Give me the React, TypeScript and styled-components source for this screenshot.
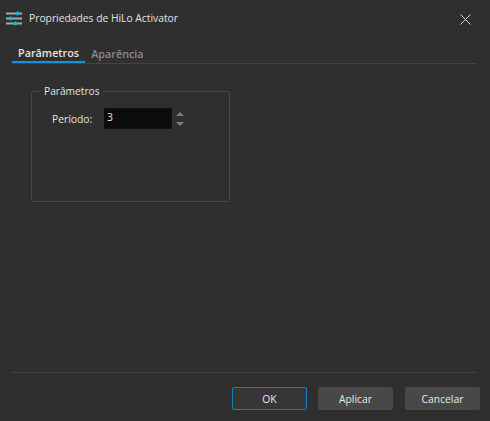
import styled, { createGlobalStyle } from 'styled-components';

const Global = createGlobalStyle`
  html, body {
    margin: 0;
    padding: 0;
    background: #2f2f2f;
  }
`;

const Dialog = styled.div`
  width: 490px;
  height: 421px;
  box-sizing: border-box;
  display: flex;
  flex-direction: column;
  background: #2f2f2f;
  color: #e6e6e6;
  font-family: 'Open Sans', 'Noto Sans', sans-serif;
  font-size: 10.4px;
  overflow: hidden;
`;

const TitleBar = styled.div`
  height: 36px;
  flex: none;
  display: flex;
  align-items: center;
  padding: 0 19px 0 6px;
  gap: 7px;
`;

const Title = styled.span`
  flex: 1;
  font-size: 10.3px;
  color: #e2e2e2;
`;

const Tabs = styled.div`
  flex: none;
  height: 20px;
  margin: 7px 14px 0 12px;
  display: flex;
  border-bottom: 1px solid #444;
`;

const Tab = styled.div<{ $active?: boolean }>`
  height: 20px;
  padding: 0 6px;
  display: flex;
  align-items: center;
  font-size: 10.8px;
  font-weight: 600;
  color: ${(p) => (p.$active ? '#e4e4e4' : '#8a8a8a')};
  border-bottom: ${(p) => (p.$active ? '2px solid #0e93e6' : 'none')};
  box-sizing: border-box;
`;

const Content = styled.div`
  flex: 1;
  padding: 21px 0 0 31px;
`;

const Group = styled.fieldset`
  width: 199px;
  height: 117px;
  margin: 0;
  padding: 0;
  box-sizing: border-box;
  border: 1px solid #464646;
  border-radius: 2px;
`;

const Legend = styled.legend`
  margin-left: 9px;
  padding: 0 3px;
  font-size: 10.2px;
  line-height: 13px;
  color: #e4e4e4;
`;

const Row = styled.div`
  display: flex;
  align-items: center;
  margin: 10px 0 0 20px;
`;

const Label = styled.label`
  width: 52px;
  font-size: 10.3px;
  color: #e4e4e4;
`;

const ValueBox = styled.div`
  width: 68px;
  height: 21px;
  box-sizing: border-box;
  padding: 1px 0 0 2px;
  background: #0b0b0b;
  border: 1px solid #111;
  font-size: 10.4px;
  line-height: 14px;
  color: #e6e6e6;
`;

const Spinner = styled.div`
  display: flex;
  flex-direction: column;
  gap: 6px;
  margin-left: 4px;
`;

const Arrow = styled.div<{ $down?: boolean }>`
  width: 0;
  height: 0;
  border-left: 4px solid transparent;
  border-right: 4px solid transparent;
  ${(p) =>
    p.$down ? 'border-top: 4px solid #7d7d7d;' : 'border-bottom: 4px solid #7d7d7d;'}
`;

const Footer = styled.div`
  flex: none;
  height: 48px;
  margin: 0 14px 0 12px;
  border-top: 1px solid #444;
`;

const Buttons = styled.div`
  display: flex;
  justify-content: flex-end;
  gap: 11px;
  margin: 14px -4px 0 0;
`;

const Button = styled.button<{ $primary?: boolean }>`
  width: 75px;
  height: 23px;
  padding: 0;
  font-family: inherit;
  font-size: 10.3px;
  color: #e8e8e8;
  background: ${(p) => (p.$primary ? '#363636' : '#484848')};
  border: 1px solid ${(p) => (p.$primary ? '#0a84c4' : '#484848')};
  border-radius: 2px;

  &:last-child {
    margin-left: 1px;
  }
`;

const CloseButton = styled.div`
  display: flex;
  margin-top: 3px;
`;

const CloseIcon = () => (
  <svg width="11" height="11" viewBox="0 0 11 11" fill="none">
    <path d="M0.5 0.5 L10.5 10.5 M10.5 0.5 L0.5 10.5" stroke="#d0d0d0" strokeWidth="1" />
  </svg>
);

const SlidersIcon = () => (
  <svg width="16" height="15" viewBox="0 0 16 15">
    <rect x="0" y="1.5" width="16" height="2" fill="#a8a8a8" />
    <rect x="0" y="6.5" width="16" height="2" fill="#a8a8a8" />
    <rect x="0" y="11.5" width="16" height="2" fill="#a8a8a8" />
    <circle cx="11.5" cy="2.5" r="2" fill="#12b5d8" />
    <circle cx="4.5" cy="7.5" r="2" fill="#12b5d8" />
    <circle cx="9.5" cy="12.5" r="2" fill="#12b5d8" />
  </svg>
);

export default function App() {
  return (
    <>
      <Global />
      <Dialog>
        <TitleBar>
          <SlidersIcon />
          <Title>Propriedades de HiLo Activator</Title>
          <CloseButton>
            <CloseIcon />
          </CloseButton>
        </TitleBar>
        <Tabs>
          <Tab $active>Parâmetros</Tab>
          <Tab>Aparência</Tab>
        </Tabs>
        <Content>
          <Group>
            <Legend>Parâmetros</Legend>
            <Row>
              <Label>Período:</Label>
              <ValueBox>3</ValueBox>
              <Spinner>
                <Arrow />
                <Arrow $down />
              </Spinner>
            </Row>
          </Group>
        </Content>
        <Footer>
          <Buttons>
            <Button $primary>OK</Button>
            <Button>Aplicar</Button>
            <Button>Cancelar</Button>
          </Buttons>
        </Footer>
      </Dialog>
    </>
  );
}
